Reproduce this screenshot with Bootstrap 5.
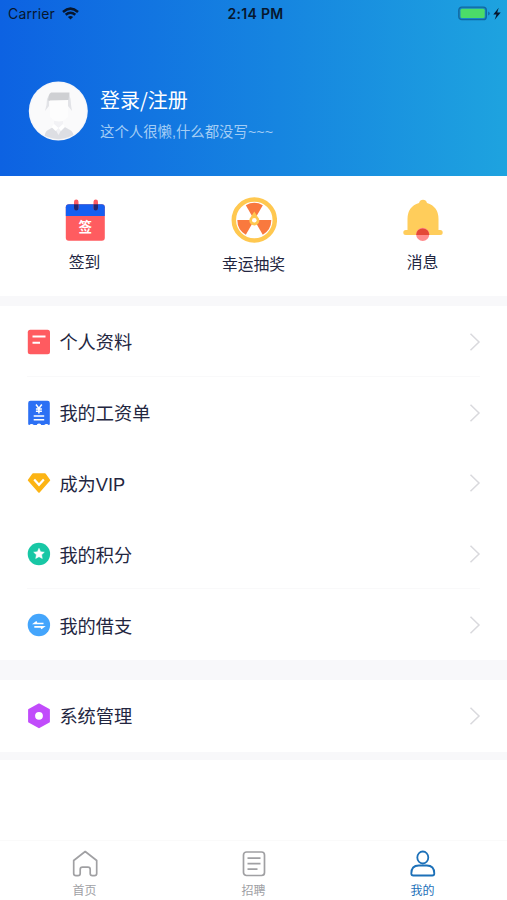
<!DOCTYPE html>
<html lang="zh-CN">
<head>
<meta charset="utf-8">
<meta name="viewport" content="width=device-width, initial-scale=1">
<title>我的</title>
<link href="https://cdn.jsdelivr.net/npm/bootstrap@5.3.0/dist/css/bootstrap.min.css" rel="stylesheet">
<style>
body{font-family:"Liberation Sans","Noto Sans CJK SC",sans-serif;color:#23263f;background:#fff}
svg{display:block;flex:none}
.screen{height:900px;overflow:hidden}
.hero{height:175.5px;background:linear-gradient(90deg,#0d62e2 0%,#1685e0 55%,#1ea3df 100%)}
.status{height:27px;font-family:Inter,sans-serif;font-size:14px;line-height:27px;color:#07172e}
.status>div{flex:1 1 0}
.carrier{letter-spacing:.15px}
.wifi{margin-left:7px}
.clock{font-weight:600;letter-spacing:.32px}
.profile{padding:54px 0 0 28px}
.profile-text{padding:7px 0 0 12px}
.user-name{font-family:"Noto Sans CJK SC",sans-serif;font-size:20px;line-height:24px}
.user-bio{font-size:14.4px;line-height:20px;margin-top:10px;color:#a3cdf5}
.shortcuts{height:120.5px}
.shortcut{font-size:15.8px;line-height:20px;padding-top:23.5px}
.shortcut span{margin-top:11px}
.shortcut.wheel{padding-top:21.5px}
.shortcut.wheel span{margin-top:12px}
.band{background:#f8f8fa}
.menu-row{height:70.8px;padding:1px 26px 0 27px;border:0;font-size:18.2px;line-height:24px;color:inherit}
.menu-row.single{height:72px;padding-top:0}
.menu-row .label{margin-left:8.4px;flex:1;padding-top:3px}
.ruled{background:linear-gradient(#f9f9fa,#f9f9fa) 50% 100%/calc(100% - 54px) 1px no-repeat}
.chev{width:12px;height:20px;fill:none;stroke:#d9d9dd;stroke-width:1.5}
.tabs{height:60px;border-top:1px solid #fafafa;font-size:12px;line-height:16px;color:#a0a1a5}
.tabs>div{padding-top:8px}
.tabs span{margin-top:4px}
.tabs .active{color:#1c70b8}
</style>
<script src="https://cdn.jsdelivr.net/npm/bootstrap@5.3.0/dist/js/bootstrap.bundle.min.js"></script>
</head>
<body>
<div class="screen d-flex flex-column">
<header class="hero">
  <div class="status d-flex">
    <div class="carrier d-flex align-items-center ps-2"><span>Carrier</span>
      <svg class="wifi" width="17" height="13" viewBox="0 0 17 13" fill="none" stroke="#07172e" stroke-width="2.5"><path d="M1 5Q8.500-1.700 16 5M3.700 7.800Q8.500 3.700 13.300 7.800"/><path d="M8.500 12.500 5.900 9.900Q8.500 7.900 11.100 9.900Z" fill="#07172e" stroke="none"/></svg>
    </div>
    <div class="clock text-center">2:14 PM</div>
    <div class="d-flex align-items-center justify-content-end pe-1">
      <svg width="45" height="16" viewBox="0 0 45 16"><rect x=".8" y="1.200" width="27.500" height="12.500" rx="3" fill="#178ac6" stroke="#12679f" stroke-width="1.300"/><rect x="2.500" y="2.800" width="24.200" height="9.300" rx="1.500" fill="#4bdc68"/><path d="M30.200 5.500v4q1.500-.5 1.500-2t-1.500-2Z" fill="#12679f"/><path d="M40.700 1.800 35.300 8.500h3.200l-1.800 5.300 6-7.200h-3.500Z" fill="#07172e"/></svg>
    </div>
  </div>
  <div class="profile d-flex">
    <svg width="60" height="60" viewBox="0 0 60 60"><defs><clipPath id="face"><circle cx="30.300" cy="30" r="28.200"/></clipPath></defs><circle cx="30.300" cy="30" r="29.500" fill="#f5f6fa"/><g clip-path="url(#face)"><path fill="#fafafb" d="M0 0h60v60H0z"/><path d="M17 30Q19 24 19 18L22 12H41L42.500 18Q43 25 44 30L40 25V20H21V25Z" fill="#e2e3e7"/><path d="M16 60Q16 51 20 49L27 45h8l7 4q4 2 5 11Z" fill="#dddee3"/><path d="M26 40h9v6l-4.500 8L26 46Z" fill="#f2f2f5"/><path d="M22 19h18v17q-9 9-18 0Z" fill="#fdfdfd"/><path d="M20 19.500 21 14 23 11.500H41.500L40.500 19Z" fill="#cfd0d3"/><path d="m26 43 4.500 4L35 43l2 3-4 4-2.500-3-3 3-4-4Z" fill="#fff"/></g></svg>
    <div class="profile-text text-white"><div class="user-name">登录/注册</div><div class="user-bio">这个人很懒,什么都没写~~~</div></div>
  </div>
</header>

<section class="shortcuts row g-0 text-center">
  <div class="shortcut col-4 d-flex flex-column align-items-center">
    <svg width="40" height="43" viewBox="0 0 40 43"><rect x=".8" y="5.300" width="39" height="36.500" rx="3" fill="#ff5c60"/><path d="M.8 17V8.300q0-3 3-3h33q3 0 3 3V17Z" fill="#155ff1"/><g fill="#ff5b61"><rect x="9" y=".6" width="4.500" height="10.500" rx="2.200"/><rect x="28.500" y=".6" width="4.500" height="10.500" rx="2.200"/></g><path d="M9 5.300h4.500v4a2.250 2.250 0 0 1-4.500 0ZM28.500 5.300H33v4a2.250 2.250 0 0 1-4.500 0Z" fill="#27276f"/><text x="20.300" y="33" fill="#fff" font-size="13.500" font-weight="700" font-family="Noto Sans CJK SC" text-anchor="middle">签</text></svg>
    <span>签到</span>
  </div>
  <div class="shortcut wheel col-4 d-flex flex-column align-items-center">
    <svg width="46" height="46" viewBox="0 0 46 46"><circle cx="23.300" cy="23" r="20.500" fill="#fff" stroke="#ffc850" stroke-width="4.500"/><g fill="#f9793e" transform="translate(.3)"><path id="blade" d="M23 23 14.500 8.300A17 17 0 0 1 31.500 8.300Z"/><use href="#blade" transform="rotate(120 23 23)"/><use href="#blade" transform="rotate(240 23 23)"/></g><path d="m23.300 14.500 3.500 5.500a5 5 0 1 1-7 0Z" fill="#ffc850"/><circle cx="23.300" cy="23.200" r="2.300" fill="#fff"/></svg>
    <span>幸运抽奖</span>
  </div>
  <div class="shortcut col-4 d-flex flex-column align-items-center">
    <svg width="40" height="43" viewBox="0 0 40 43"><path d="M16 4Q17 .8 20 .8T24 4Q35.500 7.500 35.500 20V31H37.200A2.500 2.500 0 0 1 37.200 36H2.800A2.500 2.500 0 0 1 2.800 31H4.500V20Q4.500 7.500 16 4Z" fill="#ffcd5b"/><circle cx="19.700" cy="35.300" r="6.600" fill="#ff8c8e"/><path d="M13.100 36a6.600 6.600 0 1 1 13.200 0Z" fill="#e44837"/></svg>
    <span>消息</span>
  </div>
</section>
<div class="band" style="height:10px"></div>

<svg width="0" height="0" style="position:absolute"><symbol id="chevron" viewBox="0 0 12 20"><path d="m1.500 1.800 8.500 8.200-8.500 8.200"/></symbol></svg>
<div class="list-group list-group-flush">
  <a class="menu-row ruled list-group-item d-flex align-items-center"><svg width="24" height="26" viewBox="0 0 24 26"><rect x=".8" y=".7" width="22.200" height="24.600" rx="2.500" fill="#ff5b60"/><path d="M5.500 7.600H18.500M5.500 13.700H13" stroke="#fff" stroke-width="2"/></svg><span class="label">个人资料</span><svg class="chev"><use href="#chevron"/></svg></a>
  <a class="menu-row list-group-item d-flex align-items-center"><svg width="24" height="26" viewBox="0 0 24 26"><path d="M1.200 3Q1.200.7 3.500.7h17Q22.800.7 22.800 3V24Q22.800 25 21.500 25a2.200 1.600 0 0 0-4.200 0H14.200a2.200 1.600 0 0 0-4.400 0H6.700A2.200 1.600 0 0 0 2.500 25Q1.200 25 1.200 24Z" fill="#2c70f4"/><path d="m9 4.500 2.900 4 2.900-4M11.900 8v5.500M8.900 8.900h6M8.900 11.300h6" fill="none" stroke="#fff" stroke-width="1.500"/><path d="M6.700 16h10.500M6.700 19.700h10.500" stroke="#fff" stroke-width="1.600"/></svg><span class="label">我的工资单</span><svg class="chev"><use href="#chevron"/></svg></a>
  <a class="menu-row list-group-item d-flex align-items-center"><svg width="24" height="26" viewBox="0 0 24 26"><path d="M6 4.200h12l4.300 6L12 21.800 1.700 10.200Z" fill="#fcb414" stroke="#fcb414" stroke-width="1.800" stroke-linejoin="round"/><path d="m7.200 9.500 4.800 5.300 4.800-5.300" fill="none" stroke="#fff" stroke-width="2.200"/></svg><span class="label">成为VIP</span><svg class="chev"><use href="#chevron"/></svg></a>
  <a class="menu-row ruled list-group-item d-flex align-items-center"><svg width="24" height="26" viewBox="0 0 24 26"><circle cx="11.900" cy="13" r="11.200" fill="#18c7a5"/><path d="m12 7.300 1.600 3.400 3.700.5-2.700 2.600.7 3.700-3.300-1.800-3.300 1.800.7-3.700-2.700-2.600 3.700-.5Z" fill="#fff" stroke="#fff" stroke-width=".5" stroke-linejoin="round"/></svg><span class="label">我的积分</span><svg class="chev"><use href="#chevron"/></svg></a>
  <a class="menu-row list-group-item d-flex align-items-center"><svg width="24" height="26" viewBox="0 0 24 26"><circle cx="11.900" cy="13" r="11.200" fill="#44a5fc"/><path d="M16.500 11.500H7.500L9.800 9.700M7.300 14.800h9L14 16.600" fill="none" stroke="#fff" stroke-width="1.700"/></svg><span class="label">我的借支</span><svg class="chev"><use href="#chevron"/></svg></a>
</div>
<div class="band" style="height:20px"></div>
<a class="menu-row single list-group-item d-flex align-items-center"><svg width="24" height="26" viewBox="0 0 24 26"><path d="m12 1.300 10 5.600v11.800L12 24.300 2 18.700V6.900Z" fill="#c14cfb" stroke="#c14cfb" stroke-width="1.800" stroke-linejoin="round"/><circle cx="12" cy="12.800" r="3.900" fill="#fff"/></svg><span class="label">系统管理</span><svg class="chev"><use href="#chevron"/></svg></a>
<div class="band" style="height:8px"></div>

<nav class="tabs row g-0 mt-auto">
  <div class="col-4 d-flex flex-column align-items-center"><svg width="28" height="30" viewBox="0 0 28 30" fill="none" stroke="#a0a0a3" stroke-width="1.700" stroke-linejoin="round"><path d="M14.200 2.500 2.700 11.500V24.500q0 2.200 2.300 2.200h2q2.200 0 2.200-2.200V20.500q0-2.300 2.300-2.300h5.400q2.300 0 2.300 2.300v4q0 2.200 2.200 2.200h2q2.300 0 2.300-2.200V11.500Z"/></svg><span>首页</span></div>
  <div class="col-4 d-flex flex-column align-items-center"><svg width="28" height="30" viewBox="0 0 28 30" fill="none" stroke="#a0a0a3" stroke-width="1.700"><rect x="3.500" y="3" width="21" height="23.500" rx="3"/><path d="M7.500 9.200h13M7.500 14.600h13M7.500 20.100h10"/></svg><span>招聘</span></div>
  <div class="col-4 active d-flex flex-column align-items-center"><svg width="28" height="30" viewBox="0 0 28 30" fill="none" stroke="#1c70b8" stroke-width="1.800"><ellipse cx="13.800" cy="8.500" rx="5.500" ry="6"/><path d="M2.300 24.500Q2.300 16.500 9.800 16.500h8q7.500 0 7.500 8 0 2-2 2h-19q-2 0-2-2Z"/></svg><span>我的</span></div>
</nav>
</div>
</body>
</html>
